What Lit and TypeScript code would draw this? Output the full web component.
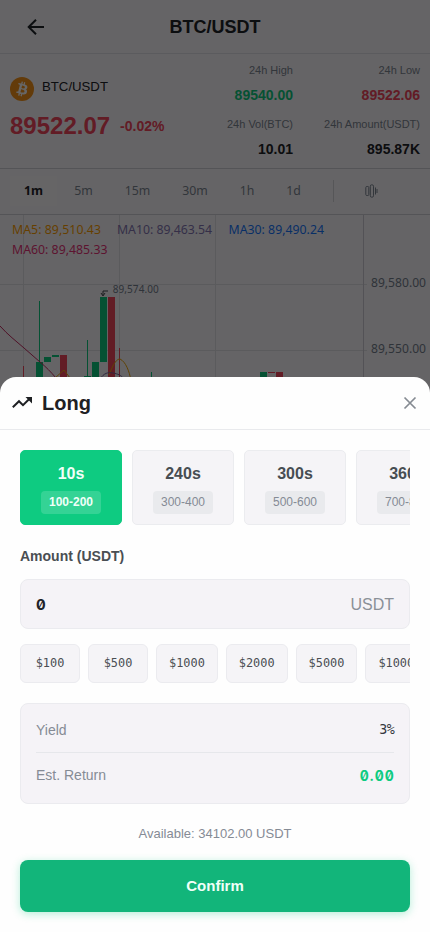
import { LitElement, html, css, svg } from "lit";
import { customElement } from "lit/decorators.js";

const PERIODS = ["1m", "5m", "15m", "30m", "1h", "1d"];
const TERMS = [
  { time: "10s", range: "100-200" },
  { time: "240s", range: "300-400" },
  { time: "300s", range: "500-600" },
  { time: "360s", range: "700-800" },
];
const AMOUNTS = ["$100", "$500", "$1000", "$2000", "$5000", "$10000"];
const UP = "#0ecb81";
const DOWN = "#f6465d";

// Candle bodies and wicks: x, y, width, height, colour
const BARS: [number, number, number, number, string][] = [
  [23, 151, 1, 20, DOWN],
  [39, 86, 1, 64, UP],
  [36, 147, 7, 30, UP],
  [44, 142, 7, 5, UP],
  [52, 140, 7, 2, UP],
  [60, 140, 7, 40, DOWN],
  [84, 161, 7, 10, UP],
  [87, 125, 1, 45, UP],
  [92, 147, 7, 30, UP],
  [100, 82, 7, 65, UP],
  [108, 82, 7, 90, DOWN],
  [119, 133, 1, 40, DOWN],
  [151, 157, 1, 20, UP],
  [260, 157, 7, 20, UP],
  [268, 157, 7, 1, DOWN],
  [276, 157, 7, 20, DOWN],
];

@customElement("trade-chart")
class TradeChart extends LitElement {
  static styles = css`
    :host { display: block; height: 190px; overflow: hidden; }
    svg { display: block; }
    text { font-family: "Noto Sans", sans-serif; }
    .ma { font-size: 12.3px; }
    .axis { font-size: 12.1px; fill: #76808f; }
    .peak { font-size: 10px; fill: #76808f; }
  `;
  render() {
    return html`<svg width="430" height="190" viewBox="0 0 430 190">
      <g fill="#e4e3e9">
        ${[23, 119, 215].map((x) => svg`<rect x=${x} y="0" width="1" height="190" />`)}
        <rect x="0" y="69" width="367" height="1" />
        <rect x="0" y="135" width="367" height="1" />
        <rect x="363" y="0" width="1" height="190" fill="#cfced6" />
      </g>
      ${BARS.map(([x, y, w, h, c]) => svg`<rect x=${x} y=${y} width=${w} height=${h} fill=${c} />`)}
      <g fill="none" stroke-width="1">
        <path d="M0 111C8 120 16 126 24 133L40 147C46 152 51 157 56 163" stroke="#c52b62" />
        <path d="M55 163L64 155L70 163M109 160C114 147 117 144 120 144C126 147 129 156 131 165" stroke="#f0a60a" />
        <path d="M100 164C104 158 108 157 113 158C118 159 121 160 124 164" stroke="#76649b" />
        <path d="M108 76H103V80M101 78L103 81L105 78" stroke="#454a50" />
      </g>
      <text class="peak" x="112.7" y="78" textLength="46">89,574.00</text>
      <text class="ma" x="12" y="19" textLength="89" fill="#ff9f00">MA5: 89,510.43</text>
      <text class="ma" x="117" y="19" textLength="95" fill="#8577b5">MA10: 89,463.54</text>
      <text class="ma" x="228.5" y="19" textLength="95.5" fill="#1677ff">MA30: 89,490.24</text>
      <text class="ma" x="12" y="39" textLength="95.5" fill="#e93479">MA60: 89,485.33</text>
      <text class="axis" x="371" y="72" textLength="55">89,580.00</text>
      <text class="axis" x="371" y="138" textLength="55">89,550.00</text>
    </svg>`;
  }
}

@customElement("app-root")
class AppRoot extends LitElement {
  static styles = css`
    :host {
      display: block; position: relative; width: 430px; height: 932px; overflow: hidden;
      background: #fff; color: #1e2329; font-family: "Liberation Sans", Arial, sans-serif;
    }
    * { box-sizing: border-box; }
    svg { display: block; flex: none; }
    .page { height: 932px; background: #fdfbff; }
    .nav { height: 54px; display: grid; grid-template-columns: 72px 1fr 72px; align-items: center; border-bottom: 1px solid #e4e3ea; }
    .nav svg { margin-left: 24px; }
    .nav h1 { margin: 0; text-align: center; font-size: 18px; line-height: 24px; }
    .market { height: 115px; padding: 0 10px; display: flex; justify-content: space-between; border-bottom: 1px solid #d3d1d9; }
    .pair { display: flex; align-items: center; gap: 8px; padding-top: 21px; font-size: 13.2px; line-height: 24px; }
    .pair span { padding-bottom: 3px; }
    .quote { display: flex; align-items: center; gap: 10px; color: #f6465d; font-weight: bold; padding-top: 8px; line-height: 32px; }
    .price { font-size: 24px; }
    .change { font-size: 14px; }
    .stats { display: grid; grid-template-columns: 80px 127px; align-content: start; padding-top: 8px; text-align: right; }
    .stat { height: 54px; }
    .stat .name { font-size: 11px; line-height: 17px; color: #7d8794; }
    .stat .value { margin-top: 7px; font-size: 14px; line-height: 18px; font-weight: bold; }
    .up { color: #0ecb81; }
    .down { color: #f6465d; }
    .periods { height: 46px; padding-bottom: 2px; display: flex; align-items: center; border-bottom: 1px solid #d3d1d9; font: 12.3px/20px "Noto Sans", sans-serif; color: #7d8794; }
    .period { text-align: center; width: 50px; }
    .period:first-child { width: 47px; margin-left: 10px; }
    .period:nth-child(2) { width: 53px; }
    .period:nth-child(3) { width: 55px; }
    .period:nth-child(4) { width: 60px; }
    .period:nth-child(5) { width: 44px; }
    .period:nth-child(6) { width: 49px; }
    .period.on { font-weight: bold; color: #1e2329; background: #fffdff; line-height: 30px; }
    .split { width: 1px; height: 22px; margin-left: 15px; margin-right: 31px; background: #d8d7dd; }
    .shade { position: absolute; inset: 0; background: rgba(0, 0, 0, 0.6); }
    .sheet { position: absolute; inset: 377px 0 0; background: #fefefe; border-radius: 16px 16px 0 0; }
    .sheet-head { height: 53px; padding: 0 13px 0 12px; display: flex; align-items: center; border-bottom: 1px solid #e9eaed; }
    .sheet-head h2 { margin: 0 auto 0 10px; font-size: 20px; line-height: 26px; color: #1e2023; }
    .content { padding: 20px 20px 0; }
    .strip { display: flex; overflow: hidden; }
    .terms { gap: 10px; }
    .term {
      flex: none; width: 102px; height: 75px; border: 1px solid #ebecef; border-radius: 5px; background: #f5f4f7;
      display: flex; flex-direction: column; align-items: center; color: #474d52;
    }
    .time { margin-top: 12px; font-size: 16px; line-height: 22px; font-weight: bold; }
    .range { margin-top: 6px; width: 60px; height: 23px; border-radius: 4px; background: #e9eaed; font-size: 12px; line-height: 22px; text-align: center; color: #858b95; }
    .term.on { background: #0ecb81; border-color: #0ecb81; color: #f0fff8; }
    .term.on .range { background: rgba(255, 255, 255, 0.16); color: #f0fff8; font-weight: bold; }
    .label { margin-top: 21px; font-size: 14px; line-height: 20px; font-weight: bold; color: #4a4e53; }
    .field { margin-top: 13px; height: 50px; padding: 0 15px; display: flex; align-items: center; justify-content: space-between; border: 1px solid #ebebef; border-radius: 8px; background: #f5f3f7; }
    .mono { font-family: "DejaVu Sans Mono", "Liberation Mono", monospace; }
    .slashed { font-family: Inter, sans-serif; font-weight: bold; font-feature-settings: "zero" 1, "tnum" 1; }
    .field .slashed { font-size: 15px; padding-top: 1px; }
    .unit { font-size: 16px; color: #8b9098; padding-top: 2px; }
    .amounts { margin-top: 15px; gap: 8px; }
    .amount { flex: none; min-width: 60px; height: 39px; padding: 0 12px; border: 1px solid #ebebef; border-radius: 6px; background: #f5f4f7; font-size: 11.9px; line-height: 36px; text-align: center; color: #4a4e53; }
    .summary { margin-top: 20px; height: 101px; padding: 0 15px; border: 1px solid #ebebef; border-radius: 8px; background: #f5f3f7; }
    .row { display: flex; justify-content: space-between; align-items: center; font-size: 14px; color: #858b95; height: 44px; }
    .row:first-child { height: 49px; padding-top: 4px; border-bottom: 1px solid #e6e7eb; }
    .row .yield { font-size: 13.3px; letter-spacing: -0.4px; margin-right: -0.4px; color: #34383d; padding-bottom: 1px; }
    .row .return { font-size: 14px; letter-spacing: 1.1px; margin-right: -1px; color: #0ecb81; padding-top: 1px; }
    .available { margin-top: 20px; text-align: center; font-size: 13px; line-height: 20px; color: #858b95; }
    .confirm { display: block; margin-top: 16px; width: 100%; height: 52px; padding: 0 0 2px; border: 0; border-radius: 8px; background: #12b57a; box-shadow: 0 2px 8px rgba(14, 203, 129, 0.3); color: #f0fff8; font: bold 15px "Liberation Sans", Arial, sans-serif; }
  `;

  stat(name: string, value: string, tone = "") {
    return html`<div class="stat"><div class="name">${name}</div><div class="value ${tone}">${value}</div></div>`;
  }

  render() {
    return html`
      <div class="page">
        <header class="nav">
          <svg width="24" height="24" viewBox="0 0 24 24" fill="none" stroke="#1e2329" stroke-width="2"><path d="M20 12H5M12 4.7L4.7 12L12 19.3" /></svg>
          <h1>BTC/USDT</h1>
        </header>
        <section class="market">
          <div>
            <div class="pair">
              <svg width="24" height="24" viewBox="0 0 32 32">
                <circle cx="16" cy="16" r="16" fill="#f7931a" />
                <path fill="#fff" d="M23.2 14.02c.31-2.1-1.29-3.23-3.47-3.98l.7-2.84-1.72-.43-.7 2.77-1.38-.33.7-2.79-1.73-.43-.7 2.84-3.5-.87-.46 1.85s1.28.3 1.25.31c.7.18.83.64.8 1l-.8 3.24-1.13 4.53c-.09.21-.3.53-.79.41l-1.26-.31-.86 1.98 3.4.85-.72 2.87 1.72.43.72-2.84 1.37.36-.7 2.82 1.73.43.71-2.87c2.95.56 5.17.34 6.1-2.33.75-2.15-.04-3.39-1.59-4.2 1.13-.26 1.98-1 2.21-2.54zm-3.95 5.54c-.54 2.15-4.15.99-5.32.7l.95-3.81c1.17.3 4.93.87 4.37 3.11zm.53-5.57c-.49 1.96-3.49.96-4.47.72l.86-3.46c.97.25 4.11.7 3.61 2.74z" />
              </svg>
              <span>BTC/USDT</span>
            </div>
            <div class="quote"><span class="price">89522.07</span><span class="change">-0.02%</span></div>
          </div>
          <div class="stats">
            ${this.stat("24h High", "89540.00", "up")}${this.stat("24h Low", "89522.06", "down")}
            ${this.stat("24h Vol(BTC)", "10.01")}${this.stat("24h Amount(USDT)", "895.87K")}
          </div>
        </section>
        <nav class="periods">
          ${PERIODS.map((p, i) => html`<span class="period ${i === 0 ? "on" : ""}">${p}</span>`)}
          <span class="split"></span>
          <svg width="13" height="14" viewBox="0 0 13 14" fill="none" stroke="#7d8794"><rect x=".8" y="2.5" width="3" height="9" rx="1" /><rect x="5.3" y=".8" width="3.2" height="12.4" rx="1.4" /><path d="M10.5 3.5V10.5M12 5V9" /></svg>
        </nav>
        <trade-chart></trade-chart>
      </div>
      <div class="shade"></div>
      <section class="sheet">
        <header class="sheet-head">
          <svg width="20" height="20" viewBox="0 0 20 20" fill="none" stroke="#1e2023" stroke-width="2"><path d="M.8 14.3L7 8.2L11 12.2L18 5.2" /><path d="M13.5 4H20V10.5Z" fill="#1e2023" stroke="none" /></svg>
          <h2>Long</h2>
          <svg width="14" height="14" viewBox="0 0 14 14" fill="none" stroke="#858b92" stroke-width="1.7"><path d="M1.5 1.5L12.5 12.5M12.5 1.5L1.5 12.5" /></svg>
        </header>
        <div class="content">
          <div class="strip terms">
            ${TERMS.map((t, i) => html`<div class="term ${i === 0 ? "on" : ""}"><div class="time">${t.time}</div><div class="range">${t.range}</div></div>`)}
          </div>
          <div class="label">Amount (USDT)</div>
          <div class="field"><span class="slashed">0</span><span class="unit">USDT</span></div>
          <div class="strip amounts">${AMOUNTS.map((a) => html`<div class="amount mono">${a}</div>`)}</div>
          <div class="summary">
            <div class="row"><span>Yield</span><span class="mono yield">3%</span></div>
            <div class="row"><span>Est. Return</span><span class="slashed return">0.00</span></div>
          </div>
          <div class="available">Available: 34102.00 USDT</div>
          <button class="confirm">Confirm</button>
        </div>
      </section>
    `;
  }
}
